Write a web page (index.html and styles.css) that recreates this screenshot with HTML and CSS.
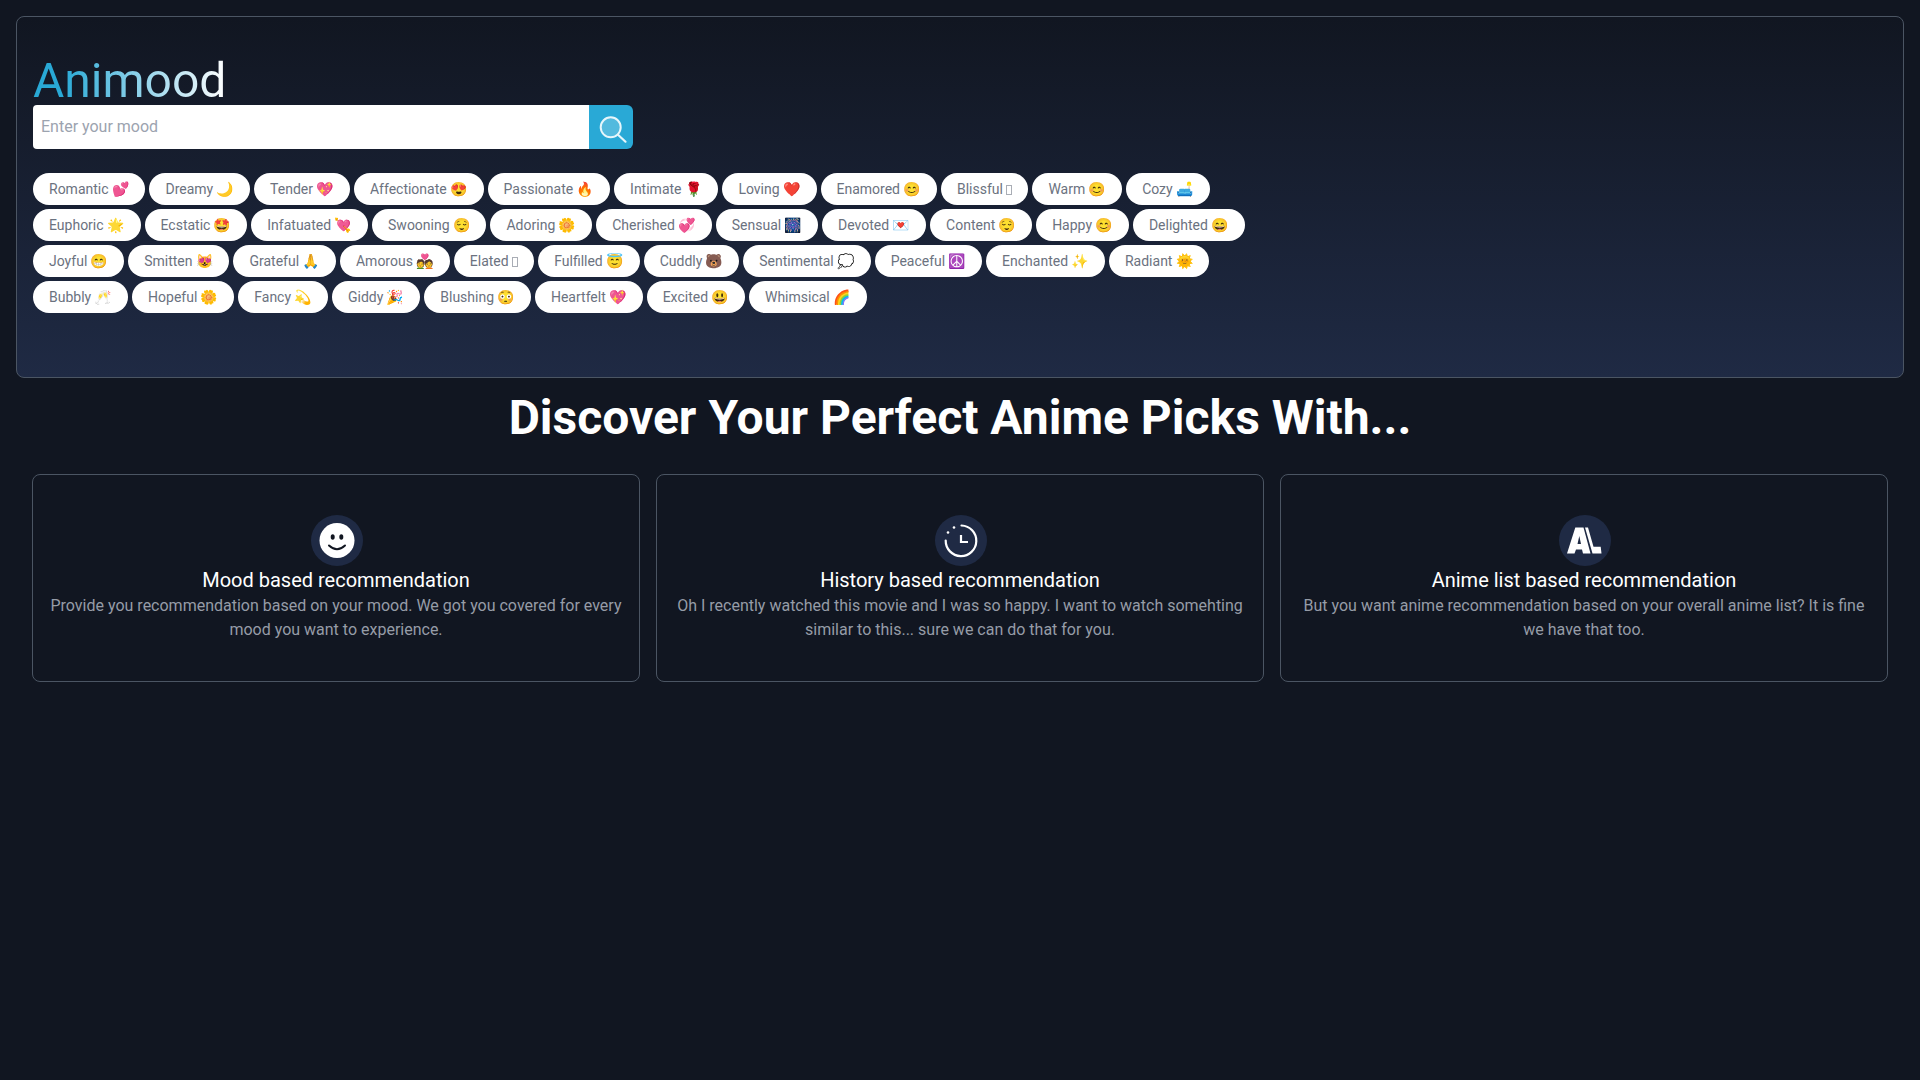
FILE: index.html
```html
<!DOCTYPE html>
<html lang="en">
  <head>
    <meta charset="UTF-8" />
    <meta name="viewport" content="width=device-width, initial-scale=1" />
    <title>Animood</title>
    <link rel="stylesheet" href="styles.css">
  </head>
  <body>
    <section class="hero">
      <h1 class="logo">Animood</h1>
      <form class="search">
        <input class="search-input" type="text" placeholder="Enter your mood" />
        <button class="search-button" type="button" aria-label="Search">
          <svg width="44" height="44" viewBox="0 0 44 44">
            <circle cx="21.7" cy="22.3" r="10" fill="rgba(255,255,255,0.2)" stroke="#e6f6fb" stroke-width="2" />
            <path d="M29 29.7L36.5 36.7" stroke="#e6f6fb" stroke-width="2.2" stroke-linecap="round" />
          </svg>
        </button>
      </form>

      <div class="moods">
        <span class="mood">Romantic 💕</span>
        <span class="mood">Dreamy 🌙</span>
        <span class="mood">Tender 💖</span>
        <span class="mood">Affectionate 😍</span>
        <span class="mood">Passionate 🔥</span>
        <span class="mood">Intimate 🌹</span>
        <span class="mood">Loving ❤️</span>
        <span class="mood">Enamored 😊</span>
        <span class="mood">Blissful <i class="no-glyph"></i></span>
        <span class="mood">Warm 😊</span>
        <span class="mood">Cozy 🛋️</span>
        <span class="mood">Euphoric 🌟</span>
        <span class="mood">Ecstatic 🤩</span>
        <span class="mood">Infatuated 💘</span>
        <span class="mood">Swooning 😌</span>
        <span class="mood">Adoring 🌼</span>
        <span class="mood">Cherished 💞</span>
        <span class="mood">Sensual 🎆</span>
        <span class="mood">Devoted 💌</span>
        <span class="mood">Content 😌</span>
        <span class="mood">Happy 😊</span>
        <span class="mood">Delighted 😄</span>
        <span class="mood">Joyful 😁</span>
        <span class="mood">Smitten 😻</span>
        <span class="mood">Grateful 🙏</span>
        <span class="mood">Amorous 💑</span>
        <span class="mood">Elated <i class="no-glyph"></i></span>
        <span class="mood">Fulfilled 😇</span>
        <span class="mood">Cuddly 🐻</span>
        <span class="mood">Sentimental 💭</span>
        <span class="mood">Peaceful ☮️</span>
        <span class="mood">Enchanted ✨</span>
        <span class="mood">Radiant 🌞</span>
        <span class="mood">Bubbly 🥂</span>
        <span class="mood">Hopeful 🌼</span>
        <span class="mood">Fancy 💫</span>
        <span class="mood">Giddy 🎉</span>
        <span class="mood">Blushing 😳</span>
        <span class="mood">Heartfelt 💖</span>
        <span class="mood">Excited 😃</span>
        <span class="mood">Whimsical 🌈</span>
      </div>
    </section>

    <h2 class="tagline">Discover Your Perfect Anime Picks With...</h2>

    <section class="features">
      <article class="card">
        <div class="card-icon">
          <svg width="52" height="52" viewBox="0 0 52 52">
            <circle cx="26" cy="25.5" r="17.5" fill="#fff" />
            <ellipse cx="21.7" cy="22" rx="2" ry="2.8" fill="#111621" />
            <ellipse cx="30.3" cy="22" rx="2" ry="2.8" fill="#111621" />
            <path d="M18 30.5Q26 38 34 30.5" fill="none" stroke="#111621" stroke-width="2" stroke-linecap="round" />
          </svg>
        </div>
        <h3 class="card-title">Mood based recommendation</h3>
        <p class="card-text">Provide you recommendation based on your mood. We got you covered for every mood you want to experience.</p>
      </article>

      <article class="card">
        <div class="card-icon">
          <svg width="52" height="52" viewBox="0 0 52 52">
            <path d="M26.5 10.5A15.3 15.3 0 1 1 10.7 25.5" fill="none" stroke="#fff" stroke-width="2.2" stroke-linecap="round" />
            <circle cx="13" cy="17.5" r="1.3" fill="#fff" />
            <circle cx="19" cy="12.5" r="1.3" fill="#fff" />
            <path d="M26 20V27H33" fill="none" stroke="#fff" stroke-width="2.2" />
          </svg>
        </div>
        <h3 class="card-title">History based recommendation</h3>
        <p class="card-text">Oh I recently watched this movie and I was so happy. I want to watch somehting similar to this... sure we can do that for you.</p>
      </article>

      <article class="card">
        <div class="card-icon">
          <svg width="52" height="52" viewBox="0 0 52 52">
            <path fill="#fff" fill-rule="evenodd" d="M16.3 12.5H24.5L31.5 38.5H24L23 34.5H17L15.5 38.5H8ZM20.3 21L18.5 29H22Z" />
            <path fill="#fff" d="M26 12.5H29L34.5 31.7H41.7L42.5 38.5H33.5Z" />
          </svg>
        </div>
        <h3 class="card-title">Anime list based recommendation</h3>
        <p class="card-text">But you want anime recommendation based on your overall anime list? It is fine we have that too.</p>
      </article>
    </section>
  </body>
</html>
```

FILE: styles.css
```css
/* Dark navy theme */
* {
  box-sizing: border-box;
}
body {
  background: #111621;
  color: #fff;
  font-family: Roboto, "Noto Color Emoji", sans-serif;
  margin: 0;
  padding: 16px;
  min-height: 100vh;
}
.hero {
  background: linear-gradient(to bottom, #111621, #1f2a44);
  border: 1px solid #4b5563;
  border-radius: 8px;
  padding: 40px 16px 64px;
}
.logo {
  margin: 0;
  font-size: 48px;
  line-height: 48px;
  font-weight: 400;
  width: fit-content;
  background: linear-gradient(to right, #29a9d6 15%, #fff);
  -webkit-background-clip: text;
  background-clip: text;
  color: transparent;
}
/* Search box */
.search {
  display: flex;
  width: 600px;
  height: 44px;
}
.search-input {
  flex: 1;
  min-width: 0;
  border: 0;
  border-radius: 4px 0 0 4px;
  padding: 0 8px 2px;
  background: #fff;
  font-family: inherit;
  font-size: 16px;
}
.search-input::placeholder {
  color: #9ca3af;
}
.search-button {
  width: 44px;
  padding: 0;
  border: 0;
  border-radius: 0 6px 6px 0;
  background: #29a9d6;
}
.search-button svg {
  display: block;
}
/* Mood chips */
.moods {
  display: flex;
  flex-wrap: wrap;
  gap: 4px;
  margin-top: 24px;
  max-width: 1240px;
}
.mood {
  background: #fff;
  color: #6b7280;
  font-size: 14px;
  line-height: 33px;
  height: 32px;
  padding: 0 16px;
  border-radius: 16px;
  white-space: nowrap;
}
.no-glyph {
  display: inline-block;
  width: 6px;
  height: 10px;
  border: 1px solid #a9adb5;
  vertical-align: -1px;
}
.tagline {
  margin: 16px 0 32px;
  text-align: center;
  font-size: 48px;
  line-height: 48px;
  font-weight: 700;
}
/* Feature cards */
.features {
  display: grid;
  grid-template-columns: repeat(3, 1fr);
  gap: 16px;
  padding: 0 16px;
}
.card {
  border: 1px solid #4b5563;
  border-radius: 8px;
  padding: 40px 16px 39px;
  text-align: center;
}
.card-icon {
  width: 52px;
  height: 51px;
  margin-left: calc(50% - 25px);
  border-radius: 50%;
  background: #1f2a44;
}
.card-icon svg {
  display: block;
}
.card-title {
  margin: 0;
  font-size: 20px;
  line-height: 28px;
  font-weight: 400;
}
.card-text {
  margin: 0;
  color: #969ca7;
  font-size: 16px;
  line-height: 24px;
}
```
